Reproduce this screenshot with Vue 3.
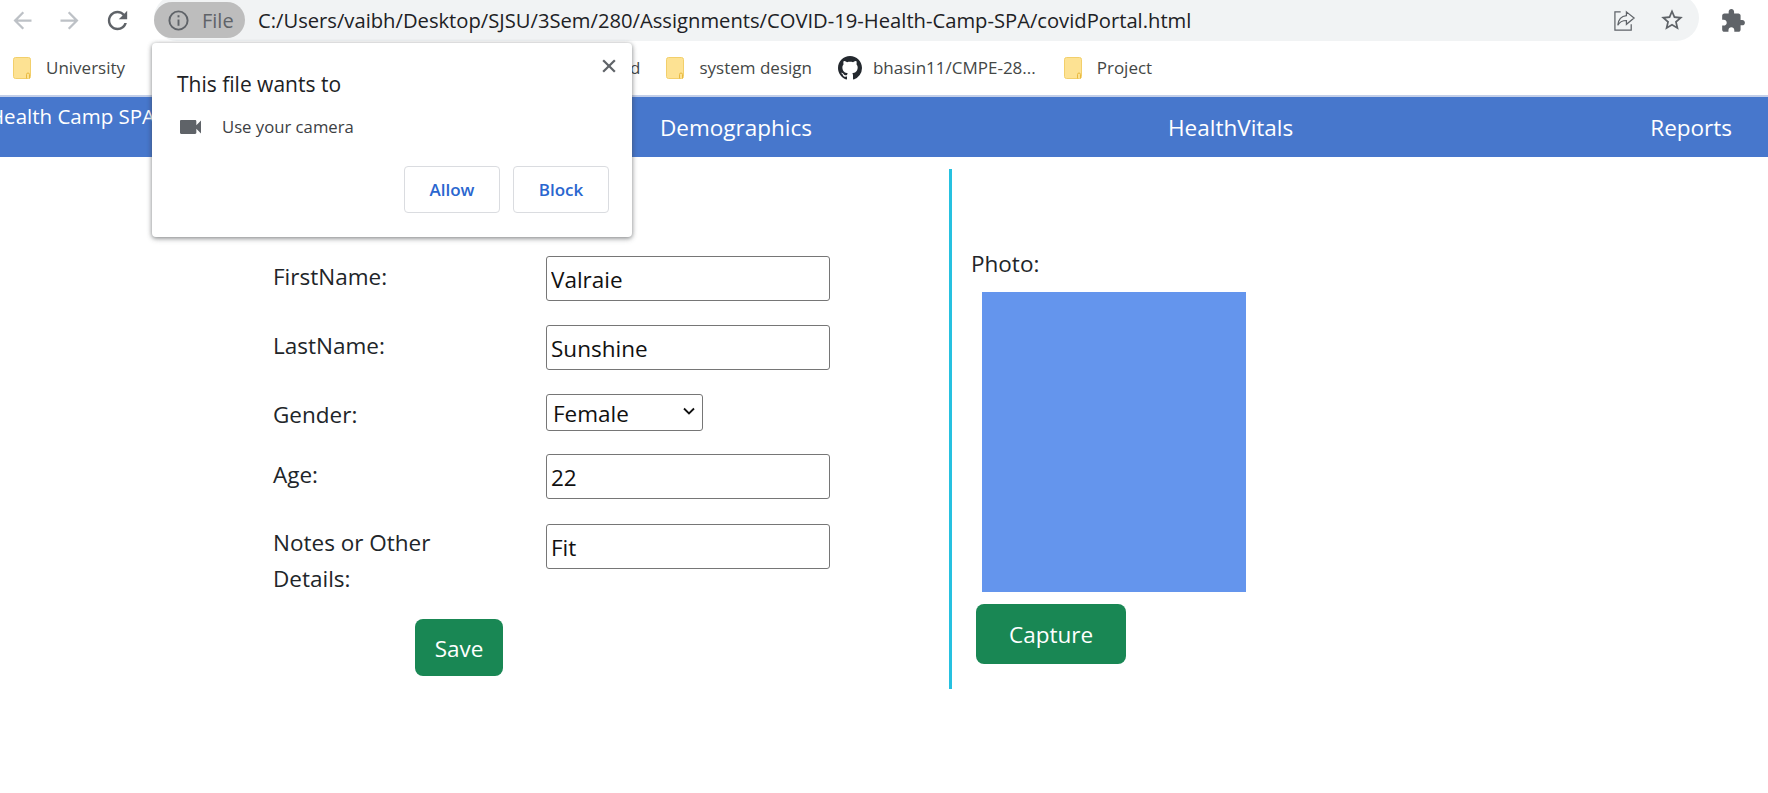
<template>
  <div class="page">
    <!-- browser toolbar -->
    <div class="toolbar">
      <svg class="tool-icon back" viewBox="0 0 24 24"><path d="M20 11H7.83l5.59-5.59L12 4l-8 8 8 8 1.41-1.41L7.83 13H20v-2z" /></svg>
      <svg class="tool-icon forward" viewBox="0 0 24 24"><path d="M4 11h12.17l-5.59-5.59L12 4l8 8-8 8-1.41-1.41L16.17 13H4v-2z" /></svg>
      <svg class="tool-icon reload" viewBox="0 0 24 24"><path d="M17.65 6.35C16.2 4.9 14.21 4 12 4c-4.42 0-7.99 3.58-7.99 8s3.57 8 7.99 8c3.73 0 6.84-2.55 7.73-6h-2.08c-.82 2.33-3.04 4-5.65 4-3.31 0-6-2.69-6-6s2.69-6 6-6c1.66 0 3.14.69 4.22 1.78L13 11h7V4l-2.35 2.35z" /></svg>
      <div class="omnibox">
        <div class="file-chip">
          <svg class="info-icon" viewBox="0 0 24 24" fill="none" stroke="#5f6368" stroke-width="2">
            <circle cx="12" cy="12" r="9.5" />
            <line x1="12" y1="11" x2="12" y2="17.5" />
            <line x1="12" y1="6.5" x2="12" y2="8.7" />
          </svg>
          <span>File</span>
        </div>
        <span class="url">C:/Users/vaibh/Desktop/SJSU/3Sem/280/Assignments/COVID-19-Health-Camp-SPA/covidPortal.html</span>
        <svg class="share-icon" viewBox="0 0 24 24" fill="none" stroke="#5f6368" stroke-width="1.3">
          <path d="M8 3H2v19h17v-6" />
          <path d="M14 3l8 6.5-8 6.5v-4c-4 0-7 1.5-9 5 .5-5 3.5-9.5 9-10z" />
        </svg>
        <svg class="star-icon" viewBox="0 0 24 24"><path d="M22 9.24l-7.19-.62L12 2 9.19 8.63 2 9.24l5.46 4.73L5.82 21 12 17.27 18.18 21l-1.63-7.03L22 9.24zM12 15.4l-3.76 2.27 1-4.28-3.32-2.88 4.38-.38L12 6.1l1.71 4.04 4.38.38-3.32 2.88 1 4.28L12 15.4z" /></svg>
      </div>
      <svg class="puzzle-icon" viewBox="0 0 24 24"><path d="M20.5 11H19V7c0-1.1-.9-2-2-2h-4V3.5C13 2.12 11.88 1 10.5 1S8 2.12 8 3.5V5H4c-1.1 0-1.99.9-1.99 2v3.8H3.5c1.49 0 2.7 1.21 2.7 2.7s-1.21 2.7-2.7 2.7H2V20c0 1.1.9 2 2 2h3.8v-1.5c0-1.49 1.21-2.7 2.7-2.7 1.49 0 2.7 1.21 2.7 2.7V22H17c1.1 0 2-.9 2-2v-4h1.5c1.38 0 2.5-1.12 2.5-2.5S21.88 11 20.5 11z" /></svg>
    </div>

    <!-- bookmarks -->
    <div class="bookmarks">
      <div v-for="b in bookmarks" :key="b.label" class="bookmark" :class="b.cls">
        <svg v-if="b.icon === 'github'" class="github" viewBox="0 0 16 16"><path d="M8 0C3.58 0 0 3.58 0 8c0 3.54 2.29 6.53 5.47 7.59.4.07.55-.17.55-.38 0-.19-.01-.82-.01-1.49-2.01.37-2.53-.49-2.69-.94-.09-.23-.48-.94-.82-1.13-.28-.15-.68-.52-.01-.53.63-.01 1.08.58 1.23.82.72 1.21 1.87.87 2.33.66.07-.52.28-.87.51-1.07-1.78-.2-3.64-.89-3.64-3.95 0-.87.31-1.59.82-2.15-.08-.2-.36-1.02.08-2.12 0 0 .67-.21 2.2.82.64-.18 1.32-.27 2-.27.68 0 1.36.09 2 .27 1.53-1.04 2.2-.82 2.2-.82.44 1.1.16 1.92.08 2.12.51.56.82 1.27.82 2.15 0 3.07-1.87 3.75-3.65 3.95.29.25.54.73.54 1.48 0 1.07-.01 1.93-.01 2.2 0 .21.15.46.55.38A8.013 8.013 0 0016 8c0-4.42-3.58-8-8-8z" /></svg>
        <svg v-else-if="b.icon === 'folder'" class="folder" viewBox="0 0 18 22">
          <rect x="0.5" y="0.5" width="17" height="21" rx="2" fill="#fde293" stroke="#f2cf6b" />
          <path d="M13.5 21.5v-4a1.5 1.5 0 0 1 3 0v4" fill="none" stroke="#e8b93f" />
        </svg>
        <span class="bm-text">{{ b.label }}</span>
      </div>
    </div>

    <!-- app nav -->
    <nav class="nav">
      <span class="brand">Health Camp SPA</span>
      <a class="nav-link demo">Demographics</a>
      <a class="nav-link vitals">HealthVitals</a>
      <a class="nav-link reports">Reports</a>
    </nav>

    <div class="content">
      <form class="form-col" @submit.prevent>
        <div class="row">
          <label>FirstName:</label>
          <input type="text" value="Valraie" />
        </div>
        <div class="row">
          <label>LastName:</label>
          <input type="text" value="Sunshine" />
        </div>
        <div class="row row-select">
          <label>Gender:</label>
          <div class="select-wrap">
            <select>
              <option>Female</option>
              <option>Male</option>
            </select>
            <svg class="chevron" viewBox="0 0 12 8" fill="none" stroke="#111" stroke-width="1.8">
              <path d="M1 1.5l5 5 5-5" />
            </svg>
          </div>
        </div>
        <div class="row row-age">
          <label>Age:</label>
          <input type="text" value="22" />
        </div>
        <div class="row row-notes">
          <label>Notes or Other<br />Details:</label>
          <input type="text" value="Fit" />
        </div>
        <button class="btn save-btn">Save</button>
      </form>

      <div class="photo-col">
        <div class="photo-label">Photo:</div>
        <div class="photo-box"></div>
        <button class="btn capture-btn">Capture</button>
      </div>
    </div>

    <!-- camera permission bubble -->
    <div class="popup">
      <svg class="popup-close" viewBox="0 0 12 12" stroke="#5f6368" stroke-width="1.9">
        <line x1="1" y1="1" x2="11" y2="11" />
        <line x1="11" y1="1" x2="1" y2="11" />
      </svg>
      <div class="popup-title">This file wants to</div>
      <div class="popup-line">
        <svg class="cam-icon" viewBox="3 6 18 12"><path d="M17 10.5V7c0-.55-.45-1-1-1H4c-.55 0-1 .45-1 1v10c0 .55.45 1 1 1h12c.55 0 1-.45 1-1v-3.5l4 4v-11l-4 4z" /></svg>
        <span>Use your camera</span>
      </div>
      <div class="popup-actions">
        <button class="popup-btn">Allow</button>
        <button class="popup-btn">Block</button>
      </div>
    </div>
  </div>
</template>

<script setup>
const bookmarks = [
  { label: 'University', icon: 'folder', cls: 'bm-university' },
  { label: 'd', icon: '', cls: 'bm-hidden' },
  { label: 'system design', icon: 'folder', cls: 'bm-system' },
  { label: 'bhasin11/CMPE-28...', icon: 'github', cls: 'bm-github' },
  { label: 'Project', icon: 'folder', cls: 'bm-project' }
];
</script>

<style>
html,
body {
  margin: 0;
  background: #fff;
}
</style>

<style scoped>
.page {
  position: relative;
  width: 1768px;
  height: 793px;
  overflow: hidden;
  background: #fff;
  color: #212529;
  font-family: "Open Sans", "Noto Sans", sans-serif;
}

.toolbar {
  height: 41px;
  display: flex;
  align-items: flex-end;
  overflow: hidden;
}

.tool-icon {
  width: 27px;
  height: 27px;
  margin-bottom: 7px;
  flex: none;
}

.back,
.forward {
  fill: #bdc1c6;
}

.back {
  margin-left: 9px;
}

.forward {
  margin-left: 20px;
}

.reload {
  width: 29px;
  height: 29px;
  margin-left: 20px;
  margin-bottom: 6px;
  fill: #5f6368;
}

.omnibox {
  width: 1545px;
  height: 46px;
  margin-left: 22px;
  flex: none;
  display: flex;
  align-items: center;
  box-sizing: border-box;
  padding-top: 6px;
  background: #f1f3f4;
  border-radius: 23px;
}

.file-chip {
  width: 91px;
  height: 36px;
  margin-top: -2px;
  border-radius: 18px;
  background: #bdbdbd;
  display: flex;
  align-items: center;
  gap: 12px;
  padding-left: 13px;
  box-sizing: border-box;
  font-size: 20px;
  color: #5f6368;
  flex: none;
}

.info-icon {
  width: 23px;
  height: 23px;
  flex: none;
}

.url {
  margin-left: 13px;
  margin-top: -2px;
  font-size: 20.2px;
  color: #202124;
  white-space: nowrap;
}

.share-icon {
  width: 23px;
  height: 23px;
  margin-left: auto;
  margin-top: -2px;
}

.star-icon {
  width: 26px;
  height: 26px;
  margin-left: 23px;
  margin-right: 14px;
  margin-top: -2px;
  fill: #5f6368;
}

.puzzle-icon {
  width: 26px;
  height: 26px;
  margin-left: 21px;
  margin-bottom: 7px;
  fill: #5f6368;
  flex: none;
}

.bookmarks {
  height: 54px;
  border-bottom: 2px solid #c3cfe9;
  display: flex;
  align-items: center;
  font-size: 17px;
  color: #444746;
}

.bookmark {
  display: flex;
  align-items: center;
  white-space: nowrap;
}

.bm-text {
  margin-top: -2px;
}

.folder {
  width: 18px;
  height: 22px;
  flex: none;
}

.github {
  width: 24px;
  height: 24px;
  fill: #24292f;
  flex: none;
}

.bm-university {
  margin-left: 13px;
  gap: 15px;
}

.bm-hidden {
  margin-left: 505px;
}

.bm-system {
  margin-left: 26px;
  gap: 15px;
}

.bm-github {
  margin-left: 26px;
  gap: 11px;
}

.bm-project {
  margin-left: 28px;
  gap: 15px;
}

.nav {
  height: 60px;
  background: #4777cc;
  color: #fff;
  display: flex;
  font-size: 22.5px;
  white-space: nowrap;
}

.brand {
  margin-left: -11px;
  width: 671px;
  flex: none;
  padding-top: 5px;
  font-size: 20.5px;
  line-height: 28px;
}

.nav-link {
  padding-top: 15px;
  flex: none;
}

.vitals {
  margin-left: 356px;
}

.reports {
  margin-left: 357px;
}

.content {
  display: flex;
}

.form-col {
  width: 949px;
  flex: none;
  box-sizing: border-box;
  padding: 99px 0 0 273px;
  font-size: 22.5px;
}

.row {
  display: flex;
  align-items: flex-start;
  margin-bottom: 24px;
}

.row-select {
  margin-bottom: 21px;
}

.row-age {
  margin-bottom: 25px;
}

.row-notes {
  margin-bottom: 20px;
}

.row label {
  width: 273px;
  flex: none;
  padding-top: 3px;
  line-height: 36px;
}

.row-notes label {
  padding-top: 1px;
  padding-bottom: 2px;
}

.row input {
  width: 284px;
  height: 45px;
  box-sizing: border-box;
  border: 1px solid #767676;
  border-radius: 3px;
  padding: 1px 4px 0;
  font: inherit;
  color: #111;
  background: #fff;
}

.select-wrap {
  position: relative;
  width: 157px;
  height: 37px;
}

.select-wrap select {
  width: 100%;
  height: 100%;
  box-sizing: border-box;
  appearance: none;
  border: 1px solid #767676;
  border-radius: 3px;
  background: #fff;
  padding: 1px 0 0 6px;
  font: inherit;
  color: #111;
}

.chevron {
  position: absolute;
  right: 8px;
  top: 13px;
  width: 12px;
  height: 8px;
  pointer-events: none;
}

.btn {
  border: none;
  background: #198754;
  color: #fff;
  font-family: inherit;
  font-size: 22.5px;
  border-radius: 8px;
  display: block;
}

.save-btn {
  width: 88px;
  height: 57px;
  margin-left: 142px;
  padding-top: 3px;
}

.photo-col {
  height: 520px;
  margin-top: 12px;
  box-sizing: border-box;
  border-left: 3px solid #26c1e0;
  padding-left: 19px;
  font-size: 22.5px;
}

.photo-label {
  margin-top: 77px;
  height: 46px;
  line-height: 36px;
}

.photo-box {
  width: 264px;
  height: 300px;
  margin-left: 11px;
  background: #6495ed;
}

.capture-btn {
  width: 150px;
  height: 60px;
  margin-left: 5px;
  margin-top: 12px;
}

.popup {
  position: absolute;
  left: 152px;
  top: 43px;
  width: 480px;
  height: 194px;
  box-sizing: border-box;
  padding: 27px 23px 0 25px;
  background: #fff;
  border-radius: 4px;
  box-shadow: 0 1px 4px rgba(60, 64, 67, 0.55), 0 2px 6px rgba(60, 64, 67, 0.2);
}

.popup-close {
  position: absolute;
  right: 16px;
  top: 16px;
  width: 14px;
  height: 14px;
}

.popup-title {
  font-size: 21px;
  line-height: 28px;
  color: #202124;
}

.popup-line {
  display: flex;
  align-items: center;
  gap: 21px;
  margin-top: 17px;
  margin-left: 3px;
  font-size: 16.7px;
  line-height: 24px;
  color: #3c4043;
}

.cam-icon {
  width: 21px;
  height: 14px;
  fill: #5f6368;
  flex: none;
}

.popup-actions {
  display: flex;
  justify-content: flex-end;
  gap: 13px;
  margin-top: 27px;
}

.popup-btn {
  width: 96px;
  height: 47px;
  border: 1px solid #dadce0;
  border-radius: 4px;
  background: #fff;
  color: #2a66cf;
  font-family: inherit;
  font-size: 17px;
  font-weight: 600;
}
</style>
